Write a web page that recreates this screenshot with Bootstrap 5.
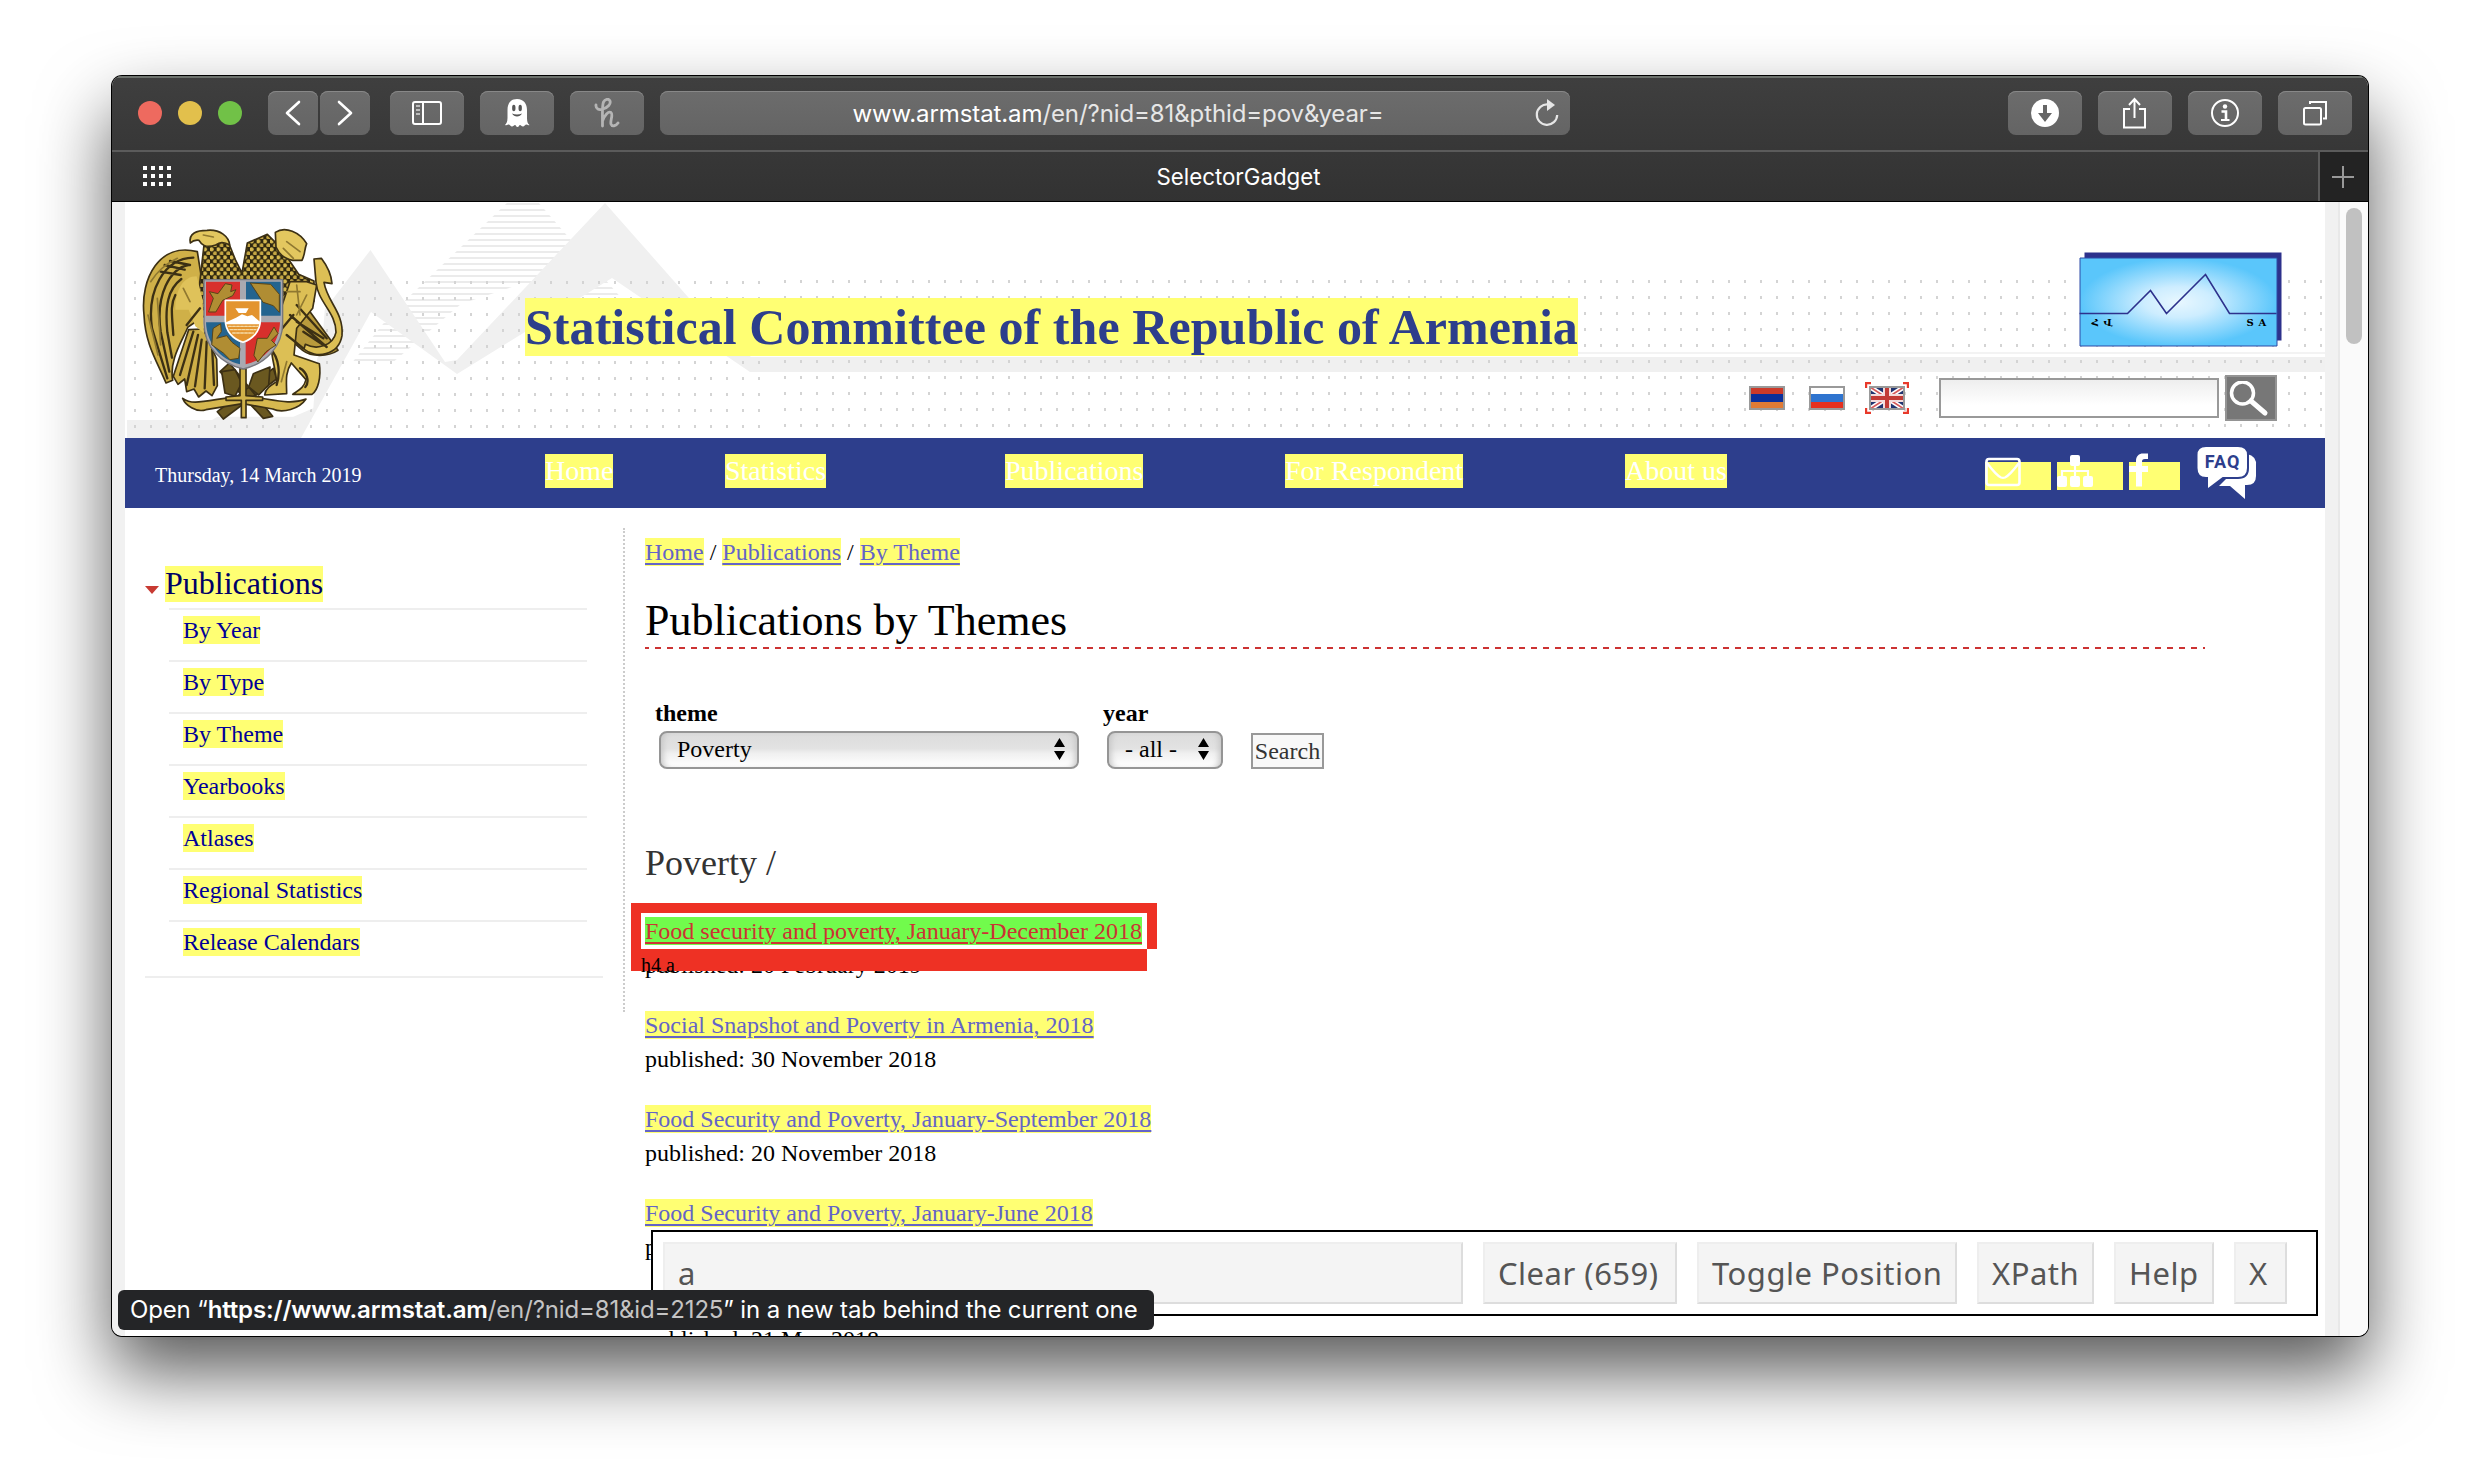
<!DOCTYPE html>
<html lang="en">
<head>
<meta charset="utf-8">
<title>Publications by Themes</title>
<link rel="stylesheet" href="https://cdn.jsdelivr.net/npm/bootstrap@5.3.0/dist/css/bootstrap.min.css">
<style>
body{background:#fff;width:2480px;height:1484px;overflow:hidden;padding:76px 112px;font-family:"Liberation Serif",serif;color:#000;font-size:24px;line-height:28px}
svg{display:block;flex:none}
.win{width:2256px;height:1260px;border-radius:10px;box-shadow:0 0 0 1px #000,0 36px 72px rgba(0,0,0,.66)}
.win-clip{border-radius:10px}
.ui{font-family:Inter,sans-serif}
.toolbar-top{height:76px;background:linear-gradient(#3f3f3f,#373737);border-bottom:2px solid #5b5b5b;box-shadow:inset 0 2px 0 #6d726d;padding:0 16px 0 26px}
.light{width:24px;height:24px;border-radius:50%;margin-right:16px}
.light.l-red{background:#ee6a5f}
.light.l-yellow{background:#e2c04c}
.light.l-green{background:#71c147;margin-right:26px}
.tb{height:44px;width:74px;margin-right:16px;border-radius:8px;background:linear-gradient(#6c6c6c,#646464);box-shadow:inset 0 1px 0 #888;display:flex;align-items:center;justify-content:center;flex:none;color:#fff}
.tb.sm{width:50px;margin-right:2px}
.tb.sm.fwd{margin-right:20px}
.tb.last{margin-right:0}
.addr{width:910px;position:relative;font-size:24px;letter-spacing:-.1px;color:#e6e6e6;padding:2px 0 0 6px;white-space:nowrap}
.reload{right:9px;top:7px}
.tabs-row{height:50px;background:linear-gradient(#373737,#323232);border-bottom:1px solid #000}
.tab-name{font-size:22.3px;line-height:49px;padding-right:43px}
.newtab{width:50px;background:#232323;border-left:2px solid #5b5b5b}
.view{height:1134px;background:#f1f1f1;padding-left:13px}
.site{width:2200px;background:#fff}
.track{width:30px;background:#fafafa;border-left:2px solid #e8e8e8;padding:6px 0 0 6px}
.thumb{width:16px;height:136px;border-radius:8px;background:#c1c1c1}
.hd{height:236px}
.emblem{margin:13px 0 0 5px}
.hl{background:#ffff73;display:inline-block;white-space:nowrap}
.site-title{font-size:50px;line-height:58px;letter-spacing:.065px;font-weight:700;color:#2d3e8c;margin:96px 0 0 165px}
.hd-right{padding:50px 43px 0 0}
.tools{margin:29px 5px 0 0}
.flag{margin:-2px 24px 0 0}
.flag.ru{margin-right:20px}
.flag.uk{margin-right:30px}
.q{width:280px;height:40px;border:2px solid #999;border-radius:0;background:linear-gradient(#eee,#fff 70%);margin:-2px 6px 0 0}
.qb{width:52px;height:46px;background:#777;border:2px solid #949494;padding:4px 0 0 2px;margin-top:-1px}
.mainnav{height:70px;background:#2d3e8c;color:#fff;font-size:28px;padding-left:30px}
.mainnav .hl{line-height:33px;height:34px;margin-top:16px;color:#fff}
.today{width:390px;font-size:20px;margin-top:23px}
.c180{width:180px}.c280{width:280px}.c340{width:340px}.c360{width:360px}
.side{width:500px;height:484px;margin-top:20px;border-right:2px dotted #ccc;padding:38px 20px 0}
.side-head{font-size:32px;line-height:34px;height:36px;color:#000066;margin-left:6px}
.arrow-dn{margin-top:20px}
.side ul{margin:6px 16px 0 24px}
.side li{height:52px;border-top:2px solid #eee;padding:6px 0 0 14px;line-height:28px}
.side li .hl{color:#000099;display:block;width:max-content}
.side-end{height:2px;background:#eee;margin-top:4px}
.main-col{margin-left:20px;padding-top:30px;width:1566px}
.main-col a{color:#6464c8;text-decoration:underline;text-decoration-thickness:2px;text-underline-offset:3px}
.crumbs{height:28px;white-space:pre}
h1.page{font-size:44px;line-height:50px;font-weight:400;margin:30px 0 0;height:51px}
.dash{height:2px;width:1560px;background:repeating-linear-gradient(90deg,#c33 0 6px,#fff 6px 12px);background-position:-2px 0}
.filters{margin-top:50px}
.f-theme{width:448px;padding-left:10px}
.f-year{width:158px;padding-left:10px}
.sel{height:38px;width:420px;margin-left:4px;border:2px solid #959595;border-radius:8px;background:linear-gradient(#dcdcdc,#e2e2e2 45%,#f0f0f0 60%,#fff);box-shadow:inset 6px 0 6px -4px #c4c4c4,inset -6px 0 6px -4px #c4c4c4;padding:0 12px 2px 16px;display:flex;align-items:center;justify-content:space-between}
.f-year .sel{width:116px}
.go{width:73px;height:36px;border:2px solid #999;border-radius:0;background:#f8f8f8;color:#333;padding:0;font:24px/32px "Liberation Serif",serif}
h2.sub{font-size:36px;line-height:42px;font-weight:400;color:#333;margin:73px 0 33px}
.pub{height:62px;margin-bottom:32px;position:relative}
.pub p{margin:6px 0 0}
.pub .hl{display:block;width:max-content}
.pub a.pick{background:#71fb4c;color:#cc3333}
.pub.cut{height:43px;margin-bottom:0;overflow:hidden}
.pub.cut p{margin-top:4px}
.frame{position:absolute;left:-14px;top:-14px;width:526px;height:46px;border:10px solid #ee3124;border-bottom:0}
.band{position:absolute;left:-14px;top:32px;width:516px;height:22px;background:#ee3124;font-size:20px;line-height:22px;padding:5px 0 0 10px}
.gadget{position:absolute;left:539px;top:1154px;width:1667px;height:86px;border:2px solid #000;background:#fff;padding:10px;gap:20px;font-family:"Noto Sans",sans-serif;font-size:31px;letter-spacing:.5px;color:#555}
.gbox{height:62px;background:#f4f4f4;border:2px solid #eee;border-right-color:#ddd;border-bottom-color:#ddd;line-height:58px;padding-left:13px;white-space:nowrap;flex:none}
.status{position:absolute;left:6px;top:1214px;width:1036px;height:40px;border-radius:6px;background:#242527;color:#fff;font-size:24px;letter-spacing:-.15px;line-height:40px;padding-left:12px;white-space:pre}
.status span{color:#c4c4c4}
</style>
<script src="https://cdn.jsdelivr.net/npm/bootstrap@5.3.0/dist/js/bootstrap.bundle.min.js"></script>
</head>
<body>
<div class="win">
<div class="win-clip overflow-hidden h-100 position-relative">
  <div class="toolbar-top ui d-flex align-items-center">
    <span class="light l-red"></span><span class="light l-yellow"></span><span class="light l-green"></span>
    <div class="tb sm"><svg width="50" height="44" fill="none" stroke="#fff" stroke-width="2.600" stroke-linecap="round" stroke-linejoin="round"><path d="M31 11 19 22l12 11"/></svg></div>
    <div class="tb sm fwd"><svg width="50" height="44" fill="none" stroke="#fff" stroke-width="2.600" stroke-linecap="round" stroke-linejoin="round"><path d="M19 11 31 22 19 33"/></svg></div>
    <div class="tb"><svg width="30" height="24" fill="none" stroke="#fff" stroke-width="2"><rect x="1" y="1" width="28" height="22" rx="2"/><path d="M11 1v22"/><path stroke="#bbb" d="M4 5h4M4 9h4M4 13h4"/></svg></div>
    <div class="tb"><svg width="26" height="30"><path fill="#fff" d="M13 1C6 1 3.500 6 3.500 12v8C3.500 24 2 26 1 27c2 .6 3-.5 4-.4 1 .2 1.500 2 3 2s2-1.500 3-1.500 1 2 2.500 2 1.500-2 2.500-2 1.500 1.500 3 1.500 2-1.800 3-2 2 1 3.500.4c-1.500-1-2.500-3-2.500-7v-8C23 6 20 1 13 1z"/><ellipse cx="9.800" cy="10" rx="1.700" ry="3.200" fill="#555"/><ellipse cx="16.200" cy="10" rx="1.700" ry="3.200" fill="#555"/><path d="M8 15.500c2 4 8 4 10 0-3 1.200-7 1.200-10 0z" fill="#555"/></svg></div>
    <div class="tb"><svg width="26" height="30" fill="none" stroke="#b5b5b5" stroke-width="2.800" stroke-linecap="round" stroke-linejoin="round"><path d="M2 7c-.5 4 3 5.500 7 4 5-1.600 8-5 7-8-1-2.800-5-2-6.500 1C8 7 8.500 12 8.500 28M8.500 23c2-6 6-10 8.500-8.500 2.500 2-1 8 0 11.500 1 3 5 2 7-1"/></svg></div>
    <div class="tb addr"><span><span class="text-white">www.armstat.am</span>/en/?nid=81&amp;pthid=pov&amp;year=</span><svg class="reload position-absolute" width="28" height="32" fill="none" stroke="#e6e6e6" stroke-width="2.200"><path d="M15 6.500A10.200 10.200 0 1 0 24.200 17"/><path d="M14 1l8 6-8 6z" fill="#e6e6e6" stroke="none"/></svg></div>
    <div class="tb ms-auto"><svg width="28" height="28"><circle cx="14" cy="14" r="14" fill="#fff"/><path fill="#666" d="M12 6h4v8h5l-7 9-7-9h5z"/></svg></div>
    <div class="tb"><svg width="26" height="32" fill="none" stroke="#fff" stroke-width="2"><path d="M8 12H2v18.500h21V12h-6M12.500 21V2.500M7 8l5.500-6L18 8"/></svg></div>
    <div class="tb"><svg width="28" height="28" fill="none" stroke="#fff" stroke-width="2"><circle cx="14" cy="14" r="13"/><circle cx="14" cy="7.500" r="2.200" fill="#fff" stroke="none"/><path stroke-width="2.600" d="M10.500 12.500H15V21"/><path d="M10 21h8.500"/></svg></div>
    <div class="tb last"><svg width="26" height="26" fill="none" stroke="#fff" stroke-width="2"><rect x="2" y="8" width="17" height="16.500" rx="1.500"/><path d="M8 4V2h16v16.500h-3"/></svg></div>
  </div>
  <div class="tabs-row ui d-flex">
    <svg width="90" height="49" fill="#fff"><path d="M31 14h4v4h-4zM39 14h4v4h-4zM47 14h4v4h-4zM55 14h4v4h-4zM31 22h4v4h-4zM39 22h4v4h-4zM47 22h4v4h-4zM55 22h4v4h-4zM31 30h4v4h-4zM39 30h4v4h-4zM47 30h4v4h-4zM55 30h4v4h-4z"/></svg>
    <div class="tab-name flex-grow-1 text-center text-white">SelectorGadget</div>
    <div class="newtab"><svg width="48" height="49" stroke="#999" stroke-width="2"><path d="M12 25h22M23 14v22"/></svg></div>
  </div>
  <div class="view d-flex">
    <div class="site">
      <header class="hd position-relative d-flex">
        <svg class="position-absolute top-0 start-0" width="2200" height="236" viewBox="125 202 2200 236">
          <defs>
            <pattern id="dl" x="358" y="281" width="16" height="16" patternUnits="userSpaceOnUse"><rect width="2" height="3" fill="#d4d4d4"/></pattern>
            <pattern id="dr" x="1904" y="280" width="16" height="16" patternUnits="userSpaceOnUse"><rect width="2" height="3" fill="#d4d4d4"/></pattern>
            <pattern id="st" x="0" y="203" width="20" height="6" patternUnits="userSpaceOnUse"><rect width="20" height="2" fill="#ebebeb"/></pattern>
          </defs>
          <path fill="url(#st)" d="M508 202h30l85 98h-62l-40-16-60 20-70 60h-40l40-50z"/>
          <path fill="#f0f0f0" d="M127 420h85l100-60 0-34 20-26 38.500-50L445 362l12-2L605 203l106 120 40 34h1574v15H750L612 278 457 374l-86-62-70 126H127z"/>
          <rect x="660" y="352" width="1665" height="2" fill="#f3f3f3"/>
          <rect x="128" y="280" width="645" height="150" fill="url(#dl)"/>
          <rect x="773" y="280" width="1552" height="150" fill="url(#dr)"/>
        </svg>
        <svg class="emblem position-relative" width="230" height="220" viewBox="0 0 690 660" stroke-linejoin="round" stroke-linecap="round">
          <defs>
            <pattern id="fe" width="20" height="24" patternUnits="userSpaceOnUse"><rect width="20" height="24" fill="#2f2710"/><ellipse cx="5" cy="7" rx="6" ry="6.500" fill="#d6b94f"/><ellipse cx="15" cy="19" rx="6" ry="6.500" fill="#c4a643"/></pattern>
          </defs>
          <path fill="#fff" d="M60 100h120l30-60h110l40 30 80-40 90 40 20 80 30 0 10 60-10 130-20 100-10 140-60 25H160l-20-70-60-100-40-200z"/>
          <g stroke="#3c3014" stroke-width="5">
            <path fill="#6a5820" d="M270 470l130 140 28-6-130-160zM430 460L262 590l18 22 160-120z"/>
            <path fill="#6a5820" d="M275 470l40-6 20 40-20 40-30-10zM420 456l-50 20-14 40 30 24 30-30z"/>
            <path fill="#d6b84f" d="M158 550c30 22 60 8 180-8 90 10 140 30 190 10-20 30-70 44-100 30l-90-16-110 18c-30 10-62-14-70-34z"/>
            <path fill="#cfb048" d="M202 110C90 80 30 190 42 300c4 90 40 140 66 204l20-8c-10-60 24-110 46-160l60-40-20-110z"/>
            <path fill="#cdae47" d="M176 344l-46 140 14 24 20-16 6 38 22-8 14 24 22-18 18 14 16-30-2-80-40-90z"/>
            <path fill="url(#fe)" d="M222 90l70-16 24 60 20 40 16-90 60-26 40 40 54 80 46 20 0 60-60 90-60-60-215-5-10-60z"/>
            <path fill="#e3c75f" d="M181 84c-6-30 20-38 50-38 40-4 66 20 68 44-20-12-30-8-42 0-30 10-42 0-50-14-14-2-22 4-26 8z"/>
            <path fill="#e3c75f" d="M436 52c30-20 74 0 94 34-8 20-4 30-14 50l-28 0c-30-6-40-20-50-40z"/>
            <path fill="#b99b3c" d="M460 270l80 20 84 116c-30 20-80 20-106 0l-70-60z"/>
            <path fill="#dcbf55" d="M480 200l50 0 30 10-12 70-48 60-8 80 76 26c6 40-4 80-22 92l-58 0c20-14 34-20 40-44l-44-50c-20 30-14 60-14 92l-66 4c2-20 20-30 36-40-6-60-20-70-14-140z"/>
            <path fill="#dcbf55" d="M552 132l22-2c20 26 30 50 32 76l-24-4c10 60 60 90 54 160-10 60-80 70-114 40l4-14c40 20 84 0 92-36 0-60-54-90-60-150z"/>
            <path fill="#d0b24a" d="M330 460h18v82l50 4v10h-50v52h-14v-52h-46v-10l42-4z"/>
          </g>
          <path fill="#dfc25a" d="M200 184c-40 0-64 40-64 100l40 0 20 50 26 20-4-100z"/>
          <g fill="none" stroke="#3c3014" stroke-width="7">
            <path d="M190 128C100 130 50 230 66 340l46 150M176 150C120 160 76 240 92 350l26 120M154 192c-40 30-50 80-42 160l14 76M136 240c-16 30-10 60-6 120M170 330l40-50M104 150l60 14M120 138l60 12M92 170l60 10M150 480l40-130M170 510l34-150M195 514l20-140M224 520l6-140M252 510l-6-120M480 300l110 96M500 270l90 100M520 350l60 40M440 360l50-60M420 400c30 30 30 80 20 110M510 460c20 10 30 40 16 56M470 360l50 40M500 320l80 50"/>
            <path stroke="#8f7830" stroke-width="5" d="M62 200c20-30 40-50 80-70M54 300l30 120M82 250l10 140M470 80l40 30M460 100l30 30M500 210l10 90M470 230l40 0M220 60l30 6M470 440l-16 60M530 240l-30 60M160 220l20 40"/>
          </g>
          <path d="M222 194h236v130c0 70-50 122-118 138-68-16-118-68-118-138z" fill="#a9a9b0" stroke="#77777d" stroke-width="4"/>
          <path fill="#d8302c" d="M228 200h102v102H228zM347 322h103c-2 60-40 112-103 126z"/>
          <path fill="#24648f" d="M348 200h104v102H348zM228 322h102v126c-62-14-100-66-102-126z"/>
          <g fill="#b08d33" stroke="#5a4518" stroke-width="3"><path d="M236 290l14-40-12-20 26 6 22-30 20 4-4 20 16-6-10 18-30 14-20 34zM362 204l60 4 26 30v54l-18-20-30-10zM250 340l22-14 2 24-14 20 30-8 16 20 24 18-4 30-26 4-20-20-34-24zM372 420l10-50 30 0 20-34 12 20-20 20 14 14-30 20-24 30z"/></g>
          <path d="M286 256h105v60c0 34-24 56-52 66-29-10-53-32-53-66z" fill="#e3942f" stroke="#fff" stroke-width="5"/>
          <path fill="#fff" d="M288 322l30-14 18-10 16 6 14-4 24 20v8H288zM316 280l40 0-8 14h-22z"/>
          <path stroke="#f6dca8" stroke-width="4" stroke-dasharray="8 4" d="M296 334h88M300 344h78M308 354h62"/>
        </svg>
        <div class="position-relative"><a class="hl site-title text-decoration-none">Statistical Committee of the Republic of Armenia</a></div>
        <div class="hd-right position-relative ms-auto d-flex flex-column align-items-end">
          <svg width="203" height="95" viewBox="2079.500 251.500 203 95">
            <defs><radialGradient id="bl"><stop offset="0" stop-color="#e8f7ff"/><stop offset=".35" stop-color="#cdedff"/><stop offset=".7" stop-color="#8fd8fd"/><stop offset="1" stop-color="#5ac6fb"/></radialGradient></defs>
            <path fill="#2d318c" d="M2085 252h197v88h-197z"/><path fill="url(#bl)" stroke="#2d4aa6" d="M2080.500 257.500h197v88h-197z"/>
            <path fill="none" stroke="#2d318c" stroke-width="1.600" d="M2080 313h48l23-23 16 23 39-39 24 39h47"/>
            <g font-family="DejaVu Serif,serif" font-weight="700" font-size="10"><text x="2092" y="325">Հ</text><text x="2104" y="325">Վ</text><text x="2247" y="325">S</text><text x="2259" y="325">A</text></g>
          </svg>
          <div class="tools d-flex align-items-center">
            <svg class="flag" width="36" height="24"><path fill="#cc3a2a" d="M0 0h36v8H0z"/><path fill="#0b2f9b" d="M0 8h36v8H0z"/><path fill="#e07b35" d="M0 16h36v8H0z"/><path fill="none" stroke="#999" stroke-width="2" d="M1 1h34v22H1z"/></svg>
            <svg class="flag ru" width="36" height="24"><path fill="#fff" d="M0 0h36v8H0z"/><path fill="#2f74cf" d="M0 8h36v8H0z"/><path fill="#e5301f" d="M0 16h36v8H0z"/><path fill="none" stroke="#999" stroke-width="2" d="M1 1h34v22H1z"/></svg>
            <svg class="flag uk" width="44" height="32" fill="none"><path fill="#1f3470" d="M4 4h36v24H4z"/><path stroke="#fff" stroke-width="5" d="M5 5l34 22M39 5L5 27"/><path stroke="#d65a5a" stroke-width="1.500" d="M5 5l34 22M39 5L5 27"/><path stroke="#f3dcdc" stroke-width="8" d="M22 5v22M5 16h34"/><path stroke="#c23b36" stroke-width="4" d="M22 5v22M5 16h34"/><path stroke="#999" stroke-width="2" d="M5 5h34v22H5z"/><path stroke="#e8392a" stroke-width="2.400" d="M1 6V1h5M38 1h5v5M1 26v5h5M38 31h5v-5"/></svg>
            <input class="q" aria-label="Search">
            <div class="qb"><svg width="46" height="38" fill="none" stroke="#fff"><circle cx="13.500" cy="12" r="11" stroke-width="3.500"/><path stroke-width="5" stroke-linecap="round" d="M22 20l14 12"/></svg></div>
          </div>
        </div>
      </header>
      <nav class="mainnav d-flex align-items-start">
        <div class="today">Thursday, 14 March 2019</div>
        <div class="c180"><a class="hl text-decoration-none">Home</a></div>
        <div class="c280"><a class="hl text-decoration-none">Statistics</a></div>
        <div class="c280"><a class="hl text-decoration-none">Publications</a></div>
        <div class="c340"><a class="hl text-decoration-none">For Respondent</a></div>
        <div class="c360"><a class="hl text-decoration-none">About us</a></div>
        <svg width="72" height="64"><path fill="#ffff73" d="M0 24h66v28H0z"/><rect x="1.500" y="21" width="33" height="26" rx="2.500" fill="none" stroke="#fff" stroke-width="2.600"/><path d="M2 25c6 8 11 13 14 14.500q2 .8 4 0C23 38 28 33 34 25" fill="none" stroke="#fff" stroke-width="2.400"/></svg>
        <svg width="72" height="64" fill="#fff"><path fill="#ffff73" d="M0 24h66v28H0z"/><rect x="13" y="17" width="10" height="11" rx="2"/><rect y="38" width="10" height="11" rx="2"/><rect x="13" y="38" width="10" height="11" rx="2"/><rect x="26" y="38" width="10" height="11" rx="2"/><path fill="none" stroke="#fff" stroke-width="2.200" d="M18 27v12M5 39v-6h26v6"/></svg>
        <svg width="68" height="64"><path fill="#ffff73" d="M0 24h51v28H0z"/><path fill="#fff" d="M19 15.500v5.500h-3c-2.500 0-3 1-3 3v4h6v6h-6v14.500H7V34H0v-6h7v-5c0-5 3-7.500 7-7.500z"/></svg>
        <svg width="62" height="64" viewBox="0 0 62 64"><path fill="#fff" d="M50 16q10 2 9 12v10q0 9-9 9h-2l0 14-15-13H22l8-8h14q6-1 6-8z"/><path fill="#fff" stroke="#2d3e8c" stroke-width="2" d="M9 8h32q10 0 10 9v13q0 10-10 10H26L10 52V40H9Q-.5 40-.5 30V17Q-.5 8 9 8z"/><text x="25.500" y="30" text-anchor="middle" font-family="Roboto,sans-serif" font-weight="700" font-size="18" letter-spacing="1" fill="#2d3e8c">FAQ</text></svg>
      </nav>
      <div class="d-flex">
        <aside class="side">
          <div class="d-flex"><svg class="arrow-dn" width="14" height="8"><path fill="#c83a32" d="M0 0h14L7 8z"/></svg><a class="hl side-head text-decoration-none">Publications</a></div>
          <ul class="list-unstyled">
            <li><a class="hl text-decoration-none">By Year</a></li>
            <li><a class="hl text-decoration-none">By Type</a></li>
            <li><a class="hl text-decoration-none">By Theme</a></li>
            <li><a class="hl text-decoration-none">Yearbooks</a></li>
            <li><a class="hl text-decoration-none">Atlases</a></li>
            <li><a class="hl text-decoration-none">Regional Statistics</a></li>
            <li><a class="hl text-decoration-none">Release Calendars</a></li>
          </ul>
          <div class="side-end"></div>
        </aside>
        <main class="main-col">
          <div class="crumbs"><a class="hl">Home</a> / <a class="hl">Publications</a> / <a class="hl">By Theme</a></div>
          <h1 class="page">Publications by Themes</h1><div class="dash"></div>
          <div class="filters d-flex align-items-end">
            <div class="f-theme"><label class="fw-bold d-block mb-1">theme</label><div class="sel"><span>Poverty</span><svg width="11" height="22"><path d="M0 9l5.500-9L11 9zM0 13l5.500 9 5.500-9z"/></svg></div></div>
            <div class="f-year"><label class="fw-bold d-block mb-1">year</label><div class="sel"><span>- all -</span><svg width="11" height="22"><path d="M0 9l5.500-9L11 9zM0 13l5.500 9 5.500-9z"/></svg></div></div>
            <button class="go">Search</button>
          </div>
          <h2 class="sub">Poverty /</h2>
          <div class="pub"><a class="hl pick">Food security and poverty, January-December 2018</a><p>published: 20 February 2019</p><div class="frame"></div><div class="band">h4 a</div></div>
          <div class="pub"><a class="hl">Social Snapshot and Poverty in Armenia, 2018</a><p>published: 30 November 2018</p></div>
          <div class="pub"><a class="hl">Food Security and Poverty, January-September 2018</a><p>published: 20 November 2018</p></div>
          <div class="pub"><a class="hl">Food Security and Poverty, January-June 2018</a><p>published: 31 August 2018</p></div>
          <div class="pub cut"><a class="hl">Food Security and Poverty, 2018</a><p>published: 21 May 2018</p></div>
        </main>
      </div>
    </div>
    <div class="track ms-auto"><div class="thumb"></div></div>
  </div>
  <div class="gadget d-flex">
    <div class="gbox" style="width:800px">a</div>
    <div class="gbox" style="width:194px">Clear (659)</div>
    <div class="gbox" style="width:260px">Toggle Position</div>
    <div class="gbox" style="width:117px">XPath</div>
    <div class="gbox" style="width:100px">Help</div>
    <div class="gbox" style="width:53px">X</div>
  </div>
  <div class="status ui">Open “<b class="fw-semibold">https://www.armstat.am</b><span>/en/?nid=81&amp;id=2125</span>” in a new tab behind the current one</div>
</div>
</div>
</body>
</html>
